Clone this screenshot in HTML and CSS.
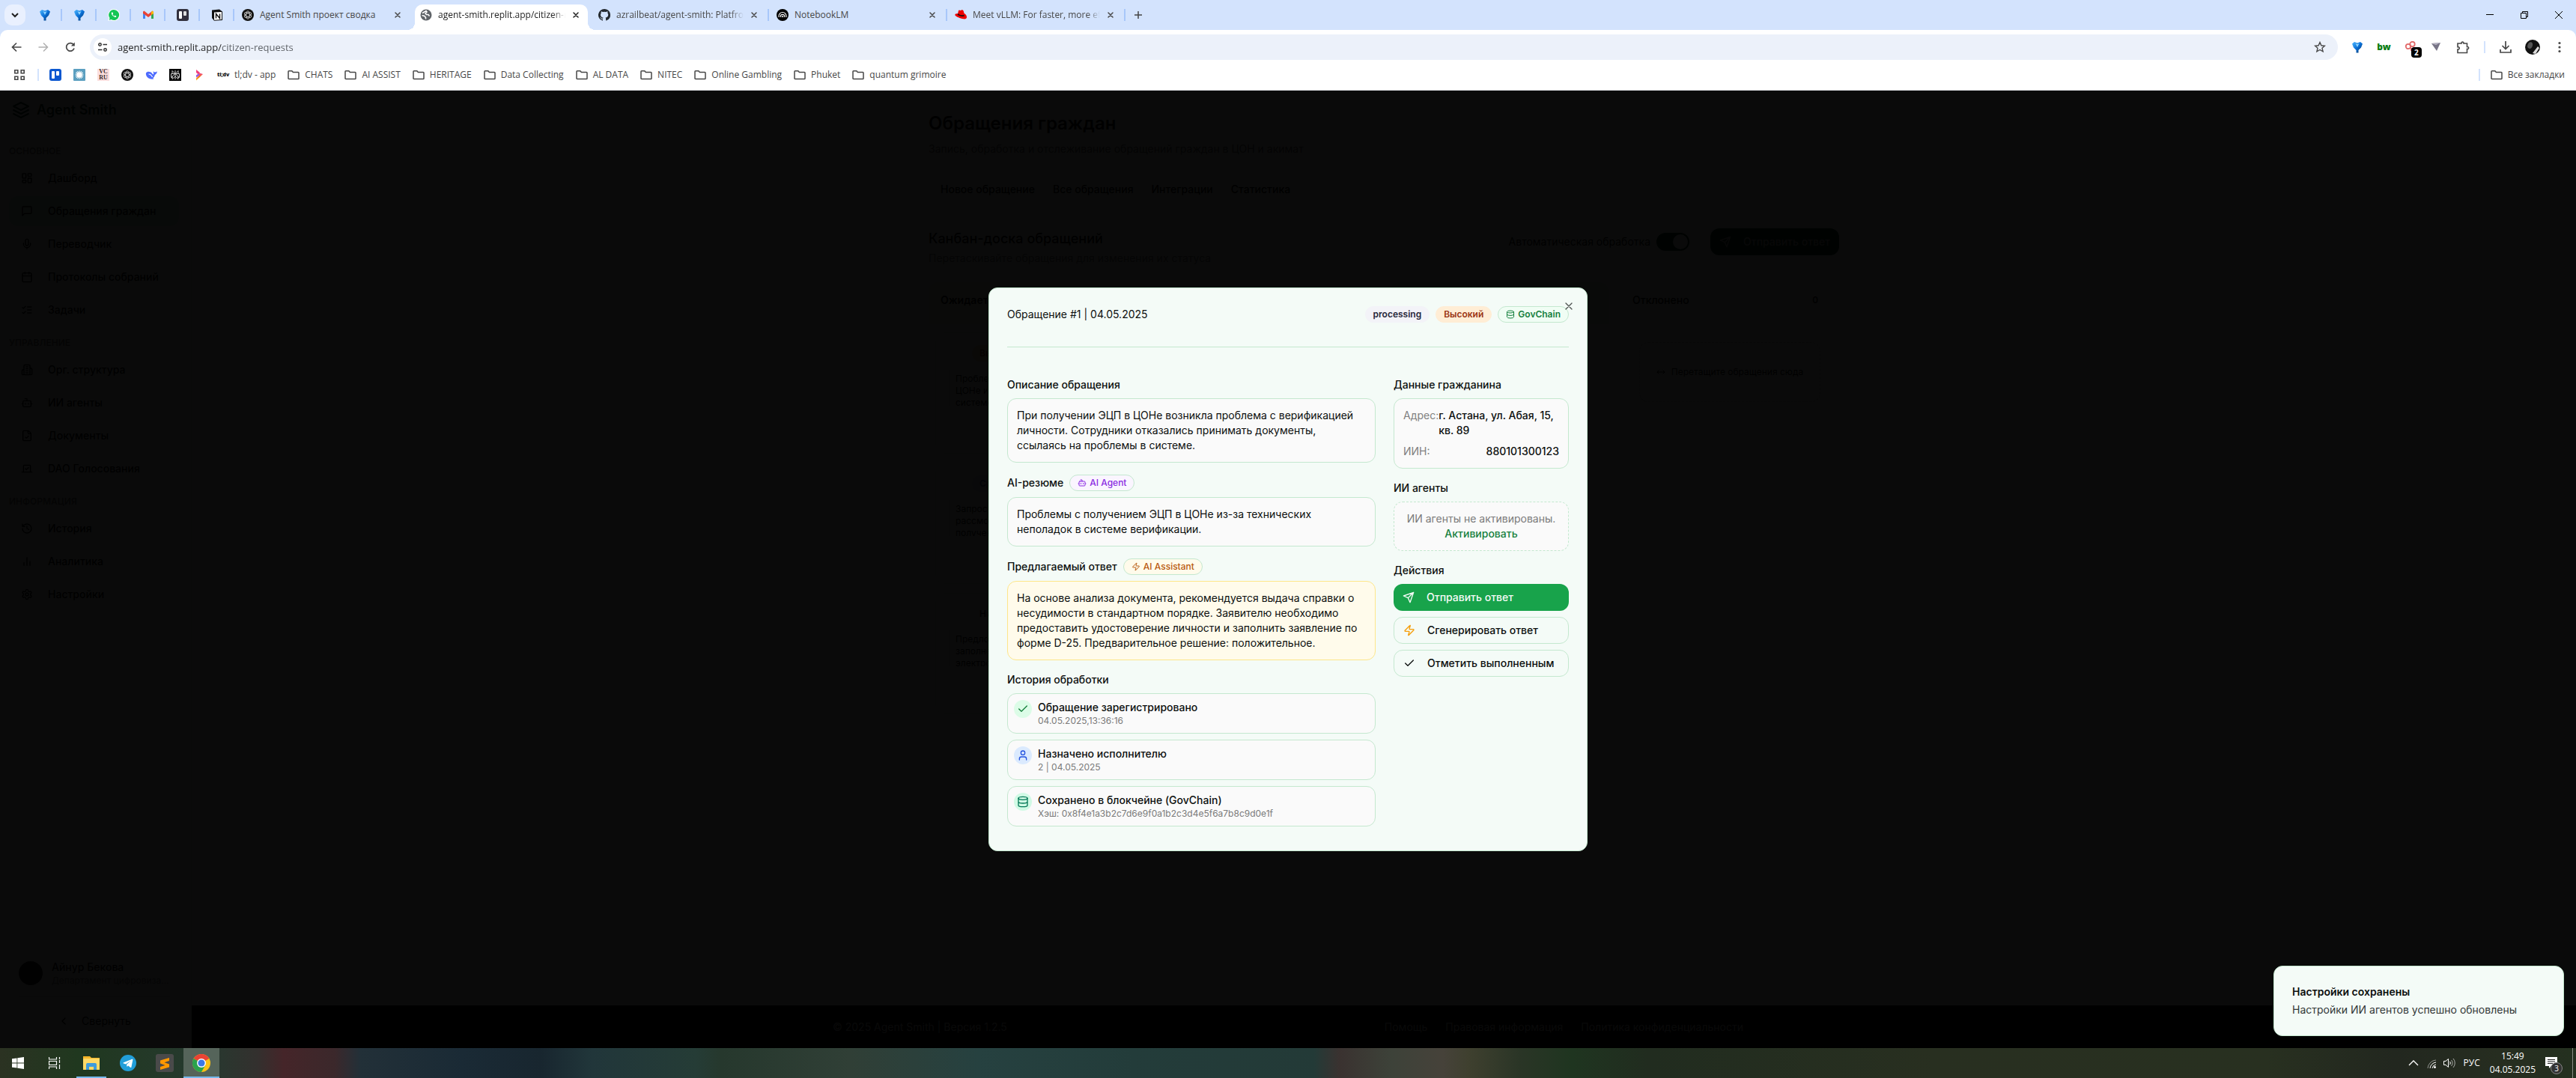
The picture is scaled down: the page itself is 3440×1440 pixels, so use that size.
FILE: index.html
```html
<!DOCTYPE html>
<html lang="ru">
<head>
<meta charset="utf-8">
<title>agent-smith.replit.app/citizen-requests</title>
<meta name="viewport" content="width=device-width, initial-scale=1">
<link rel="stylesheet" href="styles.css">
</head>
<body>
<svg class="sprite" aria-hidden="true">
  <defs>
    <linearGradient id="pin-blue" x1="0" y1="0" x2="1" y2="1"><stop offset="0" stop-color="#4db8ff"/><stop offset=".5" stop-color="#0a6fd6"/><stop offset="1" stop-color="#06315f"/></linearGradient>
    <linearGradient id="tl-warm" x1="0" y1="0" x2="0" y2="1"><stop offset="0" stop-color="#ec4899"/><stop offset=".5" stop-color="#f97316"/><stop offset="1" stop-color="#fbbf24"/></linearGradient>
  </defs>
  <symbol id="i-x" viewBox="0 0 24 24"><path d="M18 6 6 18M6 6l12 12"/></symbol>
  <symbol id="i-db" viewBox="0 0 24 24"><ellipse cx="12" cy="5" rx="9" ry="3"/><path d="M3 5v14a9 3 0 0 0 18 0V5M3 12a9 3 0 0 0 18 0"/></symbol>
  <symbol id="i-bot" viewBox="0 0 24 24"><path d="M12 8V4H8"/><rect width="16" height="12" x="4" y="8" rx="2"/><path d="M2 14h2M20 14h2M15 13v2M9 13v2"/></symbol>
  <symbol id="i-zap" viewBox="0 0 24 24"><path d="M4 14a1 1 0 0 1-.78-1.63l9.900-10.200a.5.5 0 0 1 .86.46l-1.920 6.020A1 1 0 0 0 13 10h7a1 1 0 0 1 .78 1.630l-9.900 10.200a.5.5 0 0 1-.86-.46l1.920-6.020A1 1 0 0 0 11 14z"/></symbol>
  <symbol id="i-send" viewBox="0 0 24 24"><path d="m22 2-7 20-4-9-9-4ZM22 2 11 13"/></symbol>
  <symbol id="i-check" viewBox="0 0 24 24"><path d="M20 6 9 17l-5-5"/></symbol>
  <symbol id="i-user" viewBox="0 0 24 24"><path d="M19 21v-2a4 4 0 0 0-4-4H9a4 4 0 0 0-4 4v2"/><circle cx="12" cy="7" r="4"/></symbol>
  <symbol id="i-layers" viewBox="0 0 24 24"><path d="m12 2 10 5-10 5L2 7ZM2 17l10 5 10-5M2 12l10 5 10-5"/></symbol>
  <symbol id="i-dash" viewBox="0 0 24 24"><rect width="7" height="9" x="3" y="3" rx="1"/><rect width="7" height="5" x="14" y="3" rx="1"/><rect width="7" height="9" x="14" y="12" rx="1"/><rect width="7" height="5" x="3" y="16" rx="1"/></symbol>
  <symbol id="i-msg" viewBox="0 0 24 24"><path d="M21 15a2 2 0 0 1-2 2H7l-4 4V5a2 2 0 0 1 2-2h14a2 2 0 0 1 2 2z"/></symbol>
  <symbol id="i-mic" viewBox="0 0 24 24"><rect x="9" y="2" width="6" height="13" rx="3"/><path d="M19 10v2a7 7 0 0 1-14 0v-2M12 19v3"/></symbol>
  <symbol id="i-cal" viewBox="0 0 24 24"><path d="M8 2v4M16 2v4M3 10h18"/><rect width="18" height="18" x="3" y="4" rx="2"/></symbol>
  <symbol id="i-list" viewBox="0 0 24 24"><path d="m3 17 2 2 4-4M3 7l2 2 4-4M13 6h8M13 12h8M13 18h8"/></symbol>
  <symbol id="i-build" viewBox="0 0 24 24"><path d="M6 22V4a2 2 0 0 1 2-2h8a2 2 0 0 1 2 2v18ZM6 12H4a2 2 0 0 0-2 2v6a2 2 0 0 0 2 2h2M18 9h2a2 2 0 0 1 2 2v9a2 2 0 0 1-2 2h-2M10 6h4M10 10h4M10 14h4M10 18h4"/></symbol>
  <symbol id="i-file" viewBox="0 0 24 24"><path d="M15 2H6a2 2 0 0 0-2 2v16a2 2 0 0 0 2 2h12a2 2 0 0 0 2-2V7ZM14 2v4a2 2 0 0 0 2 2h4M9 15l2 2 4-4"/></symbol>
  <symbol id="i-vote" viewBox="0 0 24 24"><path d="m9 12 2 2 4-4M5 7a2 2 0 0 1 2-2h10a2 2 0 0 1 2 2v12H5ZM22 19H2"/></symbol>
  <symbol id="i-hist" viewBox="0 0 24 24"><path d="M3 12a9 9 0 1 0 9-9 9.750 9.750 0 0 0-6.740 2.740L3 8M3 3v5h5M12 7v5l4 2"/></symbol>
  <symbol id="i-bars" viewBox="0 0 24 24"><path d="M18 20v-8M12 20V4M6 20v-6"/></symbol>
  <symbol id="i-gear" viewBox="0 0 24 24"><path d="M12.200 2h-.4a2 2 0 0 0-2 2v.2a2 2 0 0 1-1 1.700l-.4.3a2 2 0 0 1-2 0l-.2-.1a2 2 0 0 0-2.700.7l-.2.4a2 2 0 0 0 .7 2.700l.2.1a2 2 0 0 1 1 1.700v.6a2 2 0 0 1-1 1.700l-.2.1a2 2 0 0 0-.7 2.700l.2.4a2 2 0 0 0 2.700.7l.2-.1a2 2 0 0 1 2 0l.4.3a2 2 0 0 1 1 1.700v.2a2 2 0 0 0 2 2h.4a2 2 0 0 0 2-2v-.2a2 2 0 0 1 1-1.700l.4-.3a2 2 0 0 1 2 0l.2.1a2 2 0 0 0 2.700-.7l.2-.4a2 2 0 0 0-.7-2.700l-.2-.1a2 2 0 0 1-1-1.700v-.6a2 2 0 0 1 1-1.700l.2-.1a2 2 0 0 0 .7-2.700l-.2-.4a2 2 0 0 0-2.700-.7l-.2.1a2 2 0 0 1-2 0l-.4-.3a2 2 0 0 1-1-1.700V4a2 2 0 0 0-2-2z"/><circle cx="12" cy="12" r="3"/></symbol>
  <symbol id="i-left" viewBox="0 0 24 24"><path d="m15 18-6-6 6-6"/></symbol>
  <symbol id="i-move" viewBox="0 0 24 24"><path d="m18 8 4 4-4 4M2 12h20M6 8l-4 4 4 4"/></symbol>
  <symbol id="i-folder" viewBox="0 0 16 16"><path d="M1 3.500c0-.6.3-.8.8-.8h4l1.600 1.800h6.800c.5 0 .8.3.8.8v7.400c0 .5-.3.8-.8.8H1.800c-.5 0-.8-.3-.8-.8Z" fill="none" stroke="#474747" stroke-width="1.500"/></symbol>
  <symbol id="i-pin" viewBox="0 0 16 16"><path d="M1 3.500 4 1l4 1.500L12 1l3 2.500-2 5-3.500 3.500v3.500h-3V12L3 8.500Z" fill="url(#pin-blue)"/><path d="M5.500 3 8 8l2.500-5L8 4Z" fill="#8fd6ff"/></symbol>
  <symbol id="i-gpt" viewBox="0 0 16 16"><circle cx="8" cy="8" r="8" fill="#111"/><g fill="none" stroke="#ddd" stroke-width=".8"><ellipse cx="8" cy="8" rx="2.400" ry="5.200"/><ellipse cx="8" cy="8" rx="2.400" ry="5.200" transform="rotate(60 8 8)"/><ellipse cx="8" cy="8" rx="2.400" ry="5.200" transform="rotate(120 8 8)"/></g></symbol>
  <symbol id="i-trello" viewBox="0 0 16 16"><rect width="16" height="16" rx="3" fill="#0b57d0"/><rect x="3" y="3" width="4" height="10" rx="1" fill="#fff"/><rect x="9" y="3" width="4" height="6" rx="1" fill="#fff"/></symbol>
</svg>

<header class="browser">
  <div class="tabstrip">
    <button class="tab-search" aria-label="Поиск вкладок"><svg class="s12" viewBox="0 0 12 12"><path d="m2 4 4 4 4-4" fill="none" stroke="#1f1f1f" stroke-width="2"/></svg></button>
    <div class="tabs">
      <button class="pinned" aria-label="Вкладка 1"><svg class="s16"><use href="#i-pin"/></svg></button>
      <button class="pinned" aria-label="Вкладка 2"><svg class="s16"><use href="#i-pin"/></svg></button>
      <button class="pinned" aria-label="WhatsApp"><svg class="s16" viewBox="0 0 16 16"><path d="M8 0a8 8 0 1 1-3.800 15L.3 16l1.100-3.800A8 8 0 0 1 8 0Z" fill="#fff"/><path d="M8 1a7 7 0 1 1-3.500 13l-2.700.7.7-2.600A7 7 0 0 1 8 1Z" fill="#14c656"/><path d="M5.600 4.400c-1.500.8-.5 3 1 4.600s3.900 2.800 4.800 1.100c.3-.6-1.600-1.700-2-1.300l-.6.7c-1-.3-2-1.400-2.400-2.300l.6-.7c.3-.5-.6-2.400-1.400-2.100Z" fill="#fff"/></svg></button>
      <button class="pinned" aria-label="Gmail"><svg class="s16" viewBox="0 0 16 16"><path d="M1 3.500V13h3V6.500Z" fill="#4285f4"/><path d="M15 3.500V13h-3V6.500Z" fill="#34a853"/><path d="M1 3.500 2.500 2.500 8 7l5.500-4.500L15 4v2l-7 5-7-5Z" fill="#ea4335"/><path d="m12 4 1.500-1.500L15 4v2l-3 2Z" fill="#fbbc04"/></svg></button>
      <button class="pinned" aria-label="Trello"><svg class="s16" viewBox="0 0 16 16"><rect width="16" height="16" rx="3" fill="#32303d"/><rect x="3" y="3" width="4" height="10" rx="1" fill="#fff"/><rect x="9" y="3" width="4" height="6" rx="1" fill="#ddd"/></svg></button>
      <button class="pinned" aria-label="Notion"><svg class="s16" viewBox="0 0 16 16"><path d="m1 1.500 10-1 4 3V15l-11 .7L1 12Z" fill="#111"/><path d="M4 4.500 14 4v10l-10 .7Z" fill="#fff"/><path d="M6.500 12.500v-6l5 6v-6" fill="none" stroke="#111" stroke-width="1.400"/></svg></button>
      <div class="tab"><svg class="s16"><use href="#i-gpt"/></svg><span class="tab-title">Agent Smith проект сводка</span><button class="tab-x" aria-label="Закрыть"><svg class="line s12"><use href="#i-x"/></svg></button></div>
      <div class="tab active"><svg class="s16" viewBox="0 0 16 16"><circle cx="8" cy="8" r="7.500" fill="#5f6368"/><path d="M3 5.500 8 2.500l1 1.500-2 2 1.500 1.500H11l1.500 2M2.500 8.500l3.500 1 1.500 2v2" fill="none" stroke="#fff" stroke-width="1.600"/></svg><span class="tab-title fade">agent-smith.replit.app/citizen-requests</span><button class="tab-x" aria-label="Закрыть"><svg class="line s12"><use href="#i-x"/></svg></button></div>
      <div class="tab"><svg class="s16" viewBox="0 0 16 16"><path d="M8 0a8 8 0 0 0-2.500 15.600c.4.100.5-.2.5-.4v-1.500c-2 .5-2.600-1-2.600-1-.4-.8-.9-1.100-.9-1.100-.7-.5.1-.5.1-.5.8.1 1.200.8 1.200.8.7 1.200 1.900.9 2.300.7.1-.5.3-.9.5-1.100-1.800-.2-3.600-.9-3.600-4 0-.9.3-1.600.8-2.100-.1-.2-.4-1 .1-2.100 0 0 .7-.2 2.200.8a7.500 7.500 0 0 1 4 0c1.500-1 2.200-.8 2.200-.8.4 1.100.1 1.900.1 2.100.5.5.8 1.200.8 2.100 0 3.100-1.900 3.800-3.700 4 .3.3.6.8.6 1.500v2.200c0 .2.1.5.5.4A8 8 0 0 0 8 0Z" fill="#24292f"/></svg><span class="tab-title fade">azrailbeat/agent-smith: Platfrom for agents</span><button class="tab-x" aria-label="Закрыть"><svg class="line s12"><use href="#i-x"/></svg></button></div>
      <div class="tab"><svg class="s16" viewBox="0 0 16 16"><circle cx="8" cy="8" r="8" fill="#000"/><g fill="none" stroke="#fff" stroke-width="1.100"><path d="M3 11V9.500a5 5 0 0 1 10 0V11M5.200 11v-.8a2.800 2.800 0 0 1 5.600 0v.8M7.200 11v-.5a.8.8 0 0 1 1.600 0v.5"/></g></svg><span class="tab-title">NotebookLM</span><button class="tab-x" aria-label="Закрыть"><svg class="line s12"><use href="#i-x"/></svg></button></div>
      <div class="tab"><svg class="s16" viewBox="0 0 16 16"><path d="M4 6.500 5 2.300c.3-.8 1-.9 1.600-.5l1 .3 1.300-.7c.8-.3 2.300.1 2.700 1l1 3.600c2 .8 3.400 2.600 3.400 5 0 2-2 2.800-4.500 2.300C7 12.500 2 10.500.5 8.500-.2 7 1.500 6 4 6.500Z" fill="#e00"/><path d="M4 6.500c1 2 6 3.500 8.600 2" fill="none" stroke="#111" stroke-width="1.600"/></svg><span class="tab-title fade">Meet vLLM: For faster, more efficient LLM inference</span><button class="tab-x" aria-label="Закрыть"><svg class="line s12"><use href="#i-x"/></svg></button></div>
      <button class="new-tab" aria-label="Новая вкладка"><svg class="s12" viewBox="0 0 12 12"><path d="M6 1v10M1 6h10" stroke="#444" stroke-width="1.500"/></svg></button>
    </div>
    <div class="win">
      <button aria-label="Свернуть окно"><svg width="10" height="10" viewBox="0 0 10 10"><path d="M0 4.500h10" stroke="#000"/></svg></button>
      <button aria-label="Восстановить"><svg width="10" height="10" viewBox="0 0 10 10"><path d="M.5 2.500h7v7h-7ZM2.500 2.500v-2h7v7h-2" fill="none" stroke="#000"/></svg></button>
      <button aria-label="Закрыть окно"><svg width="10" height="10" viewBox="0 0 10 10"><path d="m0 0 10 10M10 0 0 10" stroke="#000"/></svg></button>
    </div>
  </div>

  <div class="toolbar">
    <div class="nav-btns">
      <button aria-label="Назад"><svg class="s16" viewBox="0 0 16 16"><path d="M14.500 8H2.500M8 2.500 2.500 8 8 13.500" fill="none" stroke="#474747" stroke-width="1.700"/></svg></button>
      <button aria-label="Вперёд"><svg class="s16" viewBox="0 0 16 16"><path d="M1.500 8h12M8 2.500 13.500 8 8 13.500" fill="none" stroke="#b0b0b0" stroke-width="1.500"/></svg></button>
      <button aria-label="Обновить"><svg class="s16" viewBox="0 0 16 16"><path d="M13 9.500A5.300 5.300 0 1 1 12.400 5" fill="none" stroke="#474747" stroke-width="1.700"/><path d="M13.800 1.500v5h-5Z" fill="#474747"/></svg></button>
    </div>
    <div class="omnibox">
      <button class="site-info" aria-label="Сведения о сайте"><svg class="s16" viewBox="0 0 16 16"><g fill="none" stroke="#333" stroke-width="1.500"><circle cx="4.500" cy="4.500" r="1.700"/><path d="M8.500 4.500H14M2 11.500h5.500"/><circle cx="11.500" cy="11.500" r="1.700"/></g></svg></button>
      <input class="url" type="text" aria-label="Адресная строка" value="agent-smith.replit.app/citizen-requests">
      <button aria-label="В закладки"><svg class="s16" viewBox="0 0 16 16"><path d="m8 1.500 1.900 4.300 4.600.4-3.500 3.100 1.100 4.600L8 11.500l-4.100 2.400L5 9.300 1.500 6.200l4.600-.4Z" fill="none" stroke="#474747" stroke-width="1.400"/></svg></button>
    </div>
    <div class="ext">
      <button aria-label="Расширение"><svg class="s16"><use href="#i-pin"/></svg></button>
      <button class="bw" aria-label="bw">bw</button>
      <button class="has-badge" aria-label="Расширение, 2"><svg class="s16" viewBox="0 0 16 16"><g fill="none" stroke="#e26a6a" stroke-width="1.800"><circle cx="5" cy="7" r="3.200"/><circle cx="10.500" cy="4" r="3.200"/><path d="M9 9v4"/></g></svg><span class="ext-badge">2</span></button>
      <button aria-label="Расширение"><svg class="s16" viewBox="0 0 16 16"><path d="m2 3 12-1L9 13Z" fill="#777486"/><path d="m2 3 12-1-6 3Z" fill="#b8b5c4"/></svg></button>
      <button aria-label="Расширения"><svg class="s20" viewBox="0 0 20 20"><path d="M3 5h5c-.6-2.500 3.500-2.500 3 0h4.500v4.500c2.800-.5 2.800 3.500 0 3V17.500H3V13c3 .5 3-3.800 0-3.300Z" fill="none" stroke="#474747" stroke-width="1.600"/></svg></button>
      <i class="bar"></i>
      <button aria-label="Загрузки"><svg class="s16" viewBox="0 0 16 16"><path d="M8 0v10M3.500 6 8 10.500 12.500 6M1 11v4h14v-4" fill="none" stroke="#474747" stroke-width="1.700"/></svg></button>
      <button aria-label="Профиль"><svg class="s20" viewBox="0 0 20 20"><circle cx="10" cy="10" r="10" fill="#111"/><path d="M5 4c3-2 6 0 5 4s-4 5-6 3 0-5 1-7Z" fill="#555"/><path d="m10 18 7-9 2 2-5 8Z" fill="#ddd"/></svg></button>
      <button aria-label="Меню"><svg class="s16" viewBox="0 0 16 16"><g fill="#474747"><circle cx="8" cy="2.500" r="1.600"/><circle cx="8" cy="8" r="1.600"/><circle cx="8" cy="13.500" r="1.600"/></g></svg></button>
    </div>
  </div>

  <nav class="bookmarks">
    <a href="#" aria-label="Приложения"><svg class="s16" viewBox="0 0 16 16"><path d="M1.800 1.800h4v4h-4zM10.200 1.800h4v4h-4zM1.800 10.200h4v4h-4zM10.200 10.200h4v4h-4z" fill="none" stroke="#474747" stroke-width="1.600"/></svg></a>
    <i class="bar"></i>
    <a href="#" aria-label="Trello"><svg class="s16"><use href="#i-trello"/></svg></a>
    <a href="#" aria-label="Claude"><svg class="s16" viewBox="0 0 16 16"><rect width="16" height="16" rx="1" fill="#5b9fc0"/><circle cx="8" cy="8" r="3.500" fill="#fff"/><path d="M8 2.500v11M2.500 8h11M4 4l8 8M12 4l-8 8M5.500 3l5 10M3 10.500l10-5M10.500 3l-5 10M3 5.500l10 5" stroke="#fff"/></svg></a>
    <a href="#" aria-label="VC.RU" class="vc"><span>VC</span><span>RU</span></a>
    <a href="#" aria-label="ChatGPT"><svg class="s16"><use href="#i-gpt"/></svg></a>
    <a href="#" aria-label="DeepSeek"><svg class="s16" viewBox="0 0 16 16"><path d="M1 5.500C2 3.500 5 3 7.500 4.500 9 5.500 9.500 7 11 7.500c.5-1.500-.5-3-.3-4.500.8 1.200 1.800 1.500 2.300 1.500C14 4.500 15 4 15.800 3.300c-.1 2.500-1.300 4-3 4.700-.3 2-1.300 3.500-2.500 4.300l1.200 1.200c-2 .3-4.500.2-6.500-.8C2.500 11.500.3 8.500 1 5.500Z" fill="#4d6bfe"/><path d="M4.500 7c2.500 0 4 2 5 4" fill="none" stroke="#fff" stroke-width="1.200"/></svg></a>
    <a href="#" aria-label="Perplexity"><svg class="s16" viewBox="0 0 16 16"><rect width="16" height="16" fill="#000"/><path d="M8 2v12M4 2.500 8 6.500l4-4v4H4ZM2.500 6.500h11v5H12V10L8 6.500 4 10v1.500H2.500ZM4 10v3.500l4-3.500 4 3.500V10" fill="none" stroke="#ccc"/></svg></a>
    <a href="#" aria-label="Поток"><svg class="s16" viewBox="0 0 16 16"><path d="m4 1 5 4-2 2.500L4 5Z" fill="#f43f7a"/><path d="M4 8.500 8.500 5.500 13 7l-9 8.500v-3l4-3.500-4 2.500Z" fill="url(#tl-warm)"/><path d="m4 8.500 4-2v2l-4 3Z" fill="#8b5cf6"/></svg></a>
    <a href="#"><b class="tldv">tl;dv</b>tl;dv - app</a>
    <a href="#"><svg class="s16"><use href="#i-folder"/></svg>CHATS</a>
    <a href="#"><svg class="s16"><use href="#i-folder"/></svg>AI ASSIST</a>
    <a href="#"><svg class="s16"><use href="#i-folder"/></svg>HERITAGE</a>
    <a href="#"><svg class="s16"><use href="#i-folder"/></svg>Data Collecting</a>
    <a href="#"><svg class="s16"><use href="#i-folder"/></svg>AL DATA</a>
    <a href="#"><svg class="s16"><use href="#i-folder"/></svg>NITEC</a>
    <a href="#"><svg class="s16"><use href="#i-folder"/></svg>Online Gambling</a>
    <a href="#"><svg class="s16"><use href="#i-folder"/></svg>Phuket</a>
    <a href="#"><svg class="s16"><use href="#i-folder"/></svg>quantum grimoire</a>
    <div class="all-marks"><i class="bar"></i><a href="#"><svg class="s16"><use href="#i-folder"/></svg>Все закладки</a></div>
  </nav>
</header>

<div class="viewport">
  <div class="app">
    <aside class="sidebar">
      <div class="brand"><svg class="line s24"><use href="#i-layers"/></svg>Agent Smith</div>
      <nav class="menu">
        <h4>ОСНОВНОЕ</h4>
        <a href="#"><svg class="line s16"><use href="#i-dash"/></svg>Дашборд</a>
        <a href="#" class="current"><svg class="line s16"><use href="#i-msg"/></svg>Обращения граждан</a>
        <a href="#"><svg class="line s16"><use href="#i-mic"/></svg>Переводчик</a>
        <a href="#"><svg class="line s16"><use href="#i-cal"/></svg>Протоколы собраний</a>
        <a href="#"><svg class="line s16"><use href="#i-list"/></svg>Задачи</a>
        <h4>УПРАВЛЕНИЕ</h4>
        <a href="#"><svg class="line s16"><use href="#i-build"/></svg>Орг. структура</a>
        <a href="#"><svg class="line s16"><use href="#i-bot"/></svg>ИИ агенты</a>
        <a href="#"><svg class="line s16"><use href="#i-file"/></svg>Документы</a>
        <a href="#"><svg class="line s16"><use href="#i-vote"/></svg>DAO Голосования</a>
        <h4>ИНФОРМАЦИЯ</h4>
        <a href="#"><svg class="line s16"><use href="#i-hist"/></svg>История</a>
        <a href="#"><svg class="line s16"><use href="#i-bars"/></svg>Аналитика</a>
        <a href="#"><svg class="line s16"><use href="#i-gear"/></svg>Настройки</a>
      </nav>
      <div class="account">
        <div class="me"><i class="avatar"></i><div class="me-text"><strong>Айнур Бекова</strong><span>Департамент цифровизации</span></div></div>
        <button class="collapse"><svg class="line s16"><use href="#i-left"/></svg>Свернуть</button>
      </div>
    </aside>

    <div class="page">
      <main class="content">
        <h1>Обращения граждан</h1>
        <p class="lead">Запись, обработка и отслеживание обращений граждан в ЦОН и акимат</p>
        <div class="page-tabs">
          <button>Новое обращение</button><button class="on">Все обращения</button><button>Интеграции</button><button>Статистика</button>
        </div>
        <div class="board-head">
          <div class="board-title"><h2>Канбан-доска обращений</h2><p>Перетаскивайте обращения для изменения их статуса</p></div>
          <label class="auto">Автоматическая обработка<input type="checkbox" class="switch" checked></label>
          <button class="send"><svg class="line s16"><use href="#i-send"/></svg>Отправить ответ</button>
        </div>
        <div class="board">
          <section class="column">
            <header class="col-head wait">Ожидает</header>
            <article class="ticket"><span class="prio high">Высокий</span><p>Проблемы с получением ЭЦП в<br>ЦОНе из-за неполадок в<br>системе верификации</p></article>
            <article class="ticket"><span class="prio mid">Средний</span><p>Запрос на<br>рассмотрение<br>получения</p></article>
            <article class="ticket"><span class="prio">Низкий</span><p>Предложение<br>заполнения<br>электронной формы</p></article>
          </section>
          <section class="column"><header class="col-head"></header></section>
          <section class="column"><header class="col-head done"></header></section>
          <section class="column">
            <header class="col-head rejected"><span>Отклонено</span><span class="count">0</span></header>
            <div class="drop"><svg class="line s12"><use href="#i-move"/></svg>Перетащите обращения сюда</div>
          </section>
        </div>
      </main>
      <footer class="footer">
        <div class="footer-in">
          <span>© 2025 Agent Smith | Версия 1.2.5</span>
          <div class="links"><a href="#">Помощь</a><a href="#">Правовая информация</a><a href="#">Политика конфиденциальности</a></div>
        </div>
      </footer>
    </div>
  </div>

  <div class="overlay">
    <div class="modal" role="dialog" aria-modal="true" aria-labelledby="dlg-title">
      <button class="close" aria-label="Закрыть"><svg class="line s16"><use href="#i-x"/></svg></button>
      <div class="modal-head">
        <span id="dlg-title">Обращение #1 | 04.05.2025</span>
        <div class="badges">
          <span class="badge status">processing</span>
          <span class="badge orange">Высокий</span>
          <span class="badge chain"><svg class="line s12"><use href="#i-db"/></svg>GovChain</span>
        </div>
      </div>
      <hr class="rule">
      <div class="cols">
        <div class="stack">
          <section>
            <h3>Описание обращения</h3>
            <div class="box">При получении ЭЦП в ЦОНе возникла проблема с верификацией личности. Сотрудники отказались принимать документы, ссылаясь на проблемы в системе.</div>
          </section>
          <section>
            <h3>AI-резюме <span class="badge purple"><svg class="line s12"><use href="#i-bot"/></svg>AI Agent</span></h3>
            <div class="box">Проблемы с получением ЭЦП в ЦОНе из-за технических неполадок в системе верификации.</div>
          </section>
          <section>
            <h3>Предлагаемый ответ <span class="badge amber"><svg class="line s12"><use href="#i-zap"/></svg>AI Assistant</span></h3>
            <div class="box answer">На основе анализа документа, рекомендуется выдача справки о несудимости в стандартном порядке. Заявителю необходимо предоставить удостоверение личности и заполнить заявление по форме D-25. Предварительное решение: положительное.</div>
          </section>
          <section>
            <h3>История обработки</h3>
            <div class="events">
              <div class="event"><span class="dot green"><svg class="line s16"><use href="#i-check"/></svg></span><div><strong>Обращение зарегистрировано</strong><small>04.05.2025,13:36:16</small></div></div>
              <div class="event"><span class="dot blue"><svg class="line s16"><use href="#i-user"/></svg></span><div><strong>Назначено исполнителю</strong><small>2 | 04.05.2025</small></div></div>
              <div class="event"><span class="dot teal"><svg class="line s16"><use href="#i-db"/></svg></span><div><strong>Сохранено в блокчейне (GovChain)</strong><small>Хэш: 0x8f4e1a3b2c7d6e9f0a1b2c3d4e5f6a7b8c9d0e1f</small></div></div>
            </div>
          </section>
        </div>
        <div class="stack">
          <section>
            <h3>Данные гражданина</h3>
            <dl class="box facts">
              <div><dt>Адрес:</dt><dd>г. Астана, ул. Абая, 15, кв. 89</dd></div>
              <div><dt>ИИН:</dt><dd>880101300123</dd></div>
            </dl>
          </section>
          <section>
            <h3>ИИ агенты</h3>
            <div class="box agents">ИИ агенты не активированы. <button class="activate">Активировать</button></div>
          </section>
          <section>
            <h3>Действия</h3>
            <div class="events">
              <button class="action primary"><svg class="line s16"><use href="#i-send"/></svg>Отправить ответ</button>
              <button class="action"><svg class="line s16 gold"><use href="#i-zap"/></svg>Сгенерировать ответ</button>
              <button class="action"><svg class="line s16"><use href="#i-check"/></svg>Отметить выполненным</button>
            </div>
          </section>
        </div>
      </div>
    </div>
  </div>
  <div class="toast" role="status"><strong>Настройки сохранены</strong><span>Настройки ИИ агентов успешно обновлены</span></div>
</div>

<footer class="taskbar">
  <div class="tasks">
    <button aria-label="Пуск"><svg class="s16" viewBox="0 0 16 16"><path d="m0 2.300 6.500-.9v6.200H0ZM7.300 1.300 16 0v7.600H7.300ZM0 8.400h6.500v6.200L0 13.700ZM7.300 8.400H16V16l-8.700-1.300Z" fill="#fff"/></svg></button>
    <button aria-label="Представление задач"><svg class="s16" viewBox="0 0 16 16"><path d="M.5 0v3h10V0M.5 16v-3h10v3M.5 5.500h10v5H.5ZM14.500 0v3M14.500 4v4M14.500 10v6" fill="none" stroke="#fff" stroke-width="1.200"/></svg></button>
    <button class="running" aria-label="Проводник"><svg class="s24" viewBox="0 0 24 24"><path d="M1 3h9l2 2h11v16H1Z" fill="#f5b62a"/><path d="M1 6h22v15H1Z" fill="#ffd966"/><path d="M5 21v-7a2 2 0 0 1 2-2h10a2 2 0 0 1 2 2v7h-4v-4H9v4Z" fill="#3e9bdc"/></svg></button>
    <button aria-label="Telegram"><svg class="s24" viewBox="0 0 24 24"><circle cx="12" cy="12" r="11" fill="#229ed9"/><path d="m5 11.800 12.500-5c.6-.2 1 .1.9.8l-2 9.800c-.2.7-.6.8-1.200.5l-3-2.300-1.600 1.500-.5-3 5.500-5-6.700 4.300-3-.9c-.7-.2-.7-.5.1-.7Z" fill="#fff"/></svg></button>
    <button aria-label="Sublime Text"><svg class="s24" viewBox="0 0 24 24"><rect width="24" height="24" rx="3" fill="#4a4a4a"/><path d="M18 5v4l-6.500 2.200L18 13.500v4L6 21v-4l6.500-2L6 12.500v-4Z" fill="#ff9800"/></svg></button>
    <button class="running focused" aria-label="Chrome"><svg class="s24" viewBox="0 0 24 24"><circle cx="12" cy="12" r="12" fill="#fbc116"/><path d="M12 12 1.600 6A12 12 0 0 1 22.400 6Z" fill="#ea4335"/><path d="M1.600 6A12 12 0 0 0 12 24l5.200-9-5.200-3Z" fill="#2ba24c"/><circle cx="12" cy="12" r="6" fill="#fff"/><circle cx="12" cy="12" r="4.600" fill="#3b78e7"/></svg></button>
  </div>
  <div class="tray">
    <svg class="s16" viewBox="0 0 16 16"><path d="m2 11 6-6 6 6" fill="none" stroke="#fff" stroke-width="1.400"/></svg>
    <svg class="s16" viewBox="0 0 16 16"><g fill="none" stroke="#fff"><path d="M3 15A12 12 0 0 1 14 4" opacity=".5"/><path d="M6 15a9 9 0 0 1 8-8M9 15a6 6 0 0 1 5-5"/></g><circle cx="12.500" cy="13.500" r="1.500" fill="#fff"/></svg>
    <svg class="s16" viewBox="0 0 16 16"><g fill="none" stroke="#fff"><path d="M.5 5.500h2.500L6.500 2.500v11L3 10.500H.5ZM8.500 6a3 3 0 0 1 0 4"/><path d="M10.500 4a6 6 0 0 1 0 8M13 2a9 9 0 0 1 0 12" opacity=".6"/></g></svg>
    <span class="lang">РУС</span>
    <span class="clock"><span>15:49</span><span>04.05.2025</span></span>
    <button class="notes" aria-label="Уведомления, 3"><svg class="s16" viewBox="0 0 16 16"><path d="M0 0h16v12H8l-3 3v-3H0Z" fill="#fff"/><path d="M3 3.500h10M3 6h10M3 8.500h7" stroke="#222"/></svg><span class="note-count">3</span></button>
  </div>
</footer>
</body>
</html>
```
FILE: styles.css
```css
* { box-sizing: border-box; }
html { height: 100%; overflow: hidden; }
body {
  margin: 0;
  height: 100%;
  display: flex;
  flex-direction: column;
  overflow: hidden;
  font: 14px/20px Inter, "Noto Sans", sans-serif;
  color: #0c0f0e;
}
button { font: inherit; color: inherit; background: none; border: 0; padding: 0; margin: 0; }
a { color: inherit; text-decoration: none; }
h1, h2, h3, h4, p, dl, dd { margin: 0; }
svg { display: block; flex: none; }
.sprite { position: absolute; width: 0; height: 0; }
.line { fill: none; stroke: currentColor; stroke-width: 2; stroke-linecap: round; stroke-linejoin: round; }
.s12 { width: 12px; height: 12px; }
.s16 { width: 16px; height: 16px; }
.s20 { width: 20px; height: 20px; }
.s24 { width: 24px; height: 24px; }

/* Browser window */
.browser { flex: none; background: #d3e3fd; border-bottom: 1px solid #dfe1e5; font: 12px/16px "Open Sans", "Noto Sans", sans-serif; color: #474747; }
.tabstrip { display: flex; height: 40px; padding-left: 6px; }
.tab-search { width: 28px; height: 28px; margin: 6px 3px 0 0; display: grid; place-items: center; border-radius: 10px; background: #e9f0fe; }
.tabs { display: flex; flex: 1; min-width: 0; }
.pinned, .tab { height: 40px; display: flex; align-items: center; }
.pinned { width: 46px; justify-content: center; }
.pinned, .tab { background: linear-gradient(#a8c7fa, #a8c7fa) right 12px / 2px 16px no-repeat; }
.tab { width: 238px; padding: 0 14px 0 10px; gap: 8px; }
.tab:has(+ .active) { background: none; }
.tab.active { position: relative; background: none; color: #1f1f1f; z-index: 0; }
.tab.active::before {
  content: ""; position: absolute; z-index: -1; inset: 6px 4px 0 3px;
  background: #fff; border-radius: 10px 10px 0 0;
}
.tab.active::after {
  content: ""; position: absolute; z-index: -1; left: -7px; right: -6px; bottom: 0; height: 10px;
  background:
    radial-gradient(circle at 0 0, transparent 10px, #fff 10px) left / 10px 10px no-repeat,
    radial-gradient(circle at 100% 0, transparent 10px, #fff 10px) right / 10px 10px no-repeat;
}
.tab-title { flex: 1; min-width: 0; overflow: hidden; white-space: nowrap; }
.fade { -webkit-mask-image: linear-gradient(90deg, #000 90%, transparent); mask-image: linear-gradient(90deg, #000 90%, transparent); }
.tab-x { width: 12px; height: 12px; }
.tab-x .line { stroke-width: 3; }
.new-tab { width: 34px; display: grid; place-items: center; }
.win { display: flex; }
.win button { width: 46px; display: grid; place-items: center; }
.toolbar { display: flex; align-items: center; height: 46px; background: #fff; border-radius: 10px 10px 0 0; }
.nav-btns { display: flex; gap: 20px; padding: 0 18px 0 14px; }
.omnibox { flex: 1; height: 34px; display: flex; align-items: center; gap: 8px; padding: 0 16px 0 5px; border-radius: 17px; background: #ecf1fa; }
.site-info { width: 24px; height: 24px; border-radius: 12px; background: #fff; display: grid; place-items: center; }
.url {
  flex: 1; border: 0; padding: 0; outline: 0; font: 13px/20px "Open Sans", "Noto Sans", sans-serif;
  color: transparent; background: linear-gradient(90deg, #1f1f1f 138px, #5b5f64 138px);
  -webkit-background-clip: text; background-clip: text;
}
.ext { display: flex; align-items: center; width: 318px; justify-content: space-between; padding: 0 14px 0 18px; }
.bar { width: 2px; height: 16px; background: #d3e3fd; flex: none; }
.bw { font: 800 12px/16px "Open Sans", sans-serif; color: #0a7d12; }
.has-badge { position: relative; }
.ext-badge { position: absolute; left: 9px; top: 8px; width: 14px; height: 14px; border-radius: 4px; background: #000; color: #fff; font-weight: 700; font-size: 10px; line-height: 14px; text-align: center; }
.bookmarks { display: flex; align-items: center; height: 34px; padding: 0 15px 6px 18px; background: #fff; }
.bookmarks a { display: flex; align-items: center; gap: 7px; margin-right: 16px; white-space: nowrap; }
.bookmarks .bar { margin-right: 14px; }
.bookmarks .vc { flex-direction: column; gap: 0; width: 16px; height: 16px; background: #fbdede; color: #3a2c2c; font: 700 8px/8px "Liberation Serif", serif; }
.bookmarks .tldv { font: 800 7px/16px "Open Sans", sans-serif; color: #111; width: 16px; }
.all-marks { display: flex; align-items: center; margin-left: auto; }
.bookmarks .all-marks a { margin-right: 0; }

/* Dimmed application */
.viewport { position: relative; flex: 1 1 0; min-height: 0; overflow: hidden; }
.app { display: flex; height: 100%; background: #fafafa; }
.sidebar { width: 256px; display: flex; flex-direction: column; border-right: 1px solid #d9efe0; background: #fafafa; }
.brand { display: flex; align-items: center; gap: 9px; padding: 14px 16px; color: #0a3a22; font-size: 18px; line-height: 24px; font-weight: 600; }
.menu { flex: 1; padding: 21px 16px 0 12px; display: flex; flex-direction: column; gap: 4px; }
.menu h4 { font-size: 12px; line-height: 16px; font-weight: 600; color: #737373; margin: 12px 0 4px; }
.menu h4:first-child { margin-top: 0; }
.menu a { display: flex; align-items: center; gap: 20px; height: 40px; padding: 0 16px; border-radius: 12px; font-weight: 500; }
.menu .current { background: #c4eed4; }
.account { padding: 0 28px 24px 25px; }
.me { display: flex; align-items: center; gap: 12px; padding-bottom: 13px; border-bottom: 1px solid #d0d0d0; }
.avatar { width: 32px; height: 32px; border-radius: 50%; background: #222; flex: none; }
.me-text { min-width: 0; display: flex; flex-direction: column; }
.me-text strong { font-weight: 500; }
.me-text span { font-size: 12px; line-height: 16px; color: #777; overflow: hidden; white-space: nowrap; text-overflow: ellipsis; }
.collapse { display: flex; align-items: center; justify-content: center; gap: 16px; width: 100%; height: 24px; margin-top: 20px; }
.page { flex: 1; min-width: 0; display: flex; flex-direction: column; }
.content { flex: 1; min-height: 0; overflow: hidden; width: 100%; max-width: 1216px; margin: 0 auto; padding-top: 28px; }
.content h1 { font-size: 24px; line-height: 32px; font-weight: 600; }
.lead { margin-top: 6px; line-height: 24px; color: #606060; }
.page-tabs { display: inline-flex; height: 40px; margin: 22px 0 32px; padding: 4px; border-radius: 12px; background: #f5f5f5; }
.page-tabs button { padding: 0 12px; border-radius: 8px; font-weight: 500; }
.page-tabs .on { background: #fff; }
.board-head { display: flex; align-items: flex-start; height: 56px; }
.board-title { flex: 1; }
.board-title h2 { font-size: 18px; line-height: 28px; font-weight: 500; }
.board-title p { line-height: 24px; color: #777; }
.auto { display: flex; align-items: center; gap: 8px; height: 36px; margin-right: 28px; }
.switch { appearance: none; width: 44px; height: 24px; margin: 0; padding: 2px; border-radius: 12px; background: #063d22; }
.switch::before { content: ""; display: block; width: 20px; height: 20px; margin-left: 20px; border-radius: 50%; background: #fafafa; }
.send { display: flex; align-items: center; gap: 16px; height: 36px; padding: 0 12px; border-radius: 12px; background: #06391f; color: #b5b5b5; font-weight: 500; }
.board { display: grid; grid-template-columns: repeat(4, minmax(0, 1fr)); gap: 16px; margin-top: 16px; }
.col-head { height: 56px; padding: 14px 16px; display: flex; justify-content: space-between; font-weight: 600; border-radius: 12px 12px 0 0; background: #f4fbf7; margin-bottom: 11px; }
.wait { background: #fbf6dc; }
.done { background: #d4f5e0; }
.rejected { background: #ededed; font-weight: 500; padding-right: 28px; margin-bottom: 24px; }
.count { font-size: 12px; }
.ticket { height: 162px; margin: 0 9px 12px; padding: 16px 17px; border: 1px solid #e5efe8; border-radius: 12px; }
.prio { display: inline-block; margin-left: 31px; padding: 2px 10px; border-radius: 11px; font-size: 12px; line-height: 18px; font-weight: 600; }
.high { background: #ffddb8; color: #7a2e0e; }
.mid { background: #d9e2f5; color: #1e3a9a; }
.ticket p { height: 48px; margin-top: 11px; padding: 4px 8px 0; overflow: hidden; border-left: 1px solid #e5e5e5; font-size: 12px; line-height: 16px; }
.drop { display: flex; align-items: center; justify-content: center; gap: 8px; height: 80px; margin: 0 25px; border: 1px dashed #bbb; border-radius: 12px; font-size: 12px; }
.footer { background: #000; color: #d0d0d0; padding: 0 256px 0 0; }
.footer-in { display: flex; align-items: center; justify-content: space-between; width: 100%; max-width: 1216px; height: 57px; margin: 0 auto; }
.links { display: flex; gap: 24px; }

/* Request dialog */
.overlay { position: absolute; inset: 0; display: flex; align-items: center; justify-content: center; background: rgba(0, 0, 0, .96); }
.modal { position: relative; width: 100%; max-width: 800px; padding: 24px; border: 1px solid #c4e8cf; border-radius: 12px; background: #f4fbf7; }
.close { position: absolute; top: 16px; right: 16px; opacity: .7; }
.modal-head { display: flex; align-items: center; justify-content: space-between; height: 22px; }
.badges { display: flex; gap: 8px; }
.badge { display: inline-flex; align-items: center; gap: 4px; height: 22px; padding: 0 10px; border: 1px solid #c4e8cf; border-radius: 11px; font-size: 12px; line-height: 16px; font-weight: 600; }
.status { background: #f3f3f8; border-color: #f3f3f8; color: #27273a; }
.orange { background: #ffedd5; border-color: #ffedd5; color: #9a3412; }
.chain { background: #f0fdf4; color: #15803d; }
.purple { background: #faf5ff; color: #8b2be2; font-weight: 500; }
.amber { background: #fffbeb; color: #b95a10; font-weight: 500; }
.rule { height: 1px; margin: 32px 0 40px; border: 0; background: #c4e8cf; }
.cols { display: grid; grid-template-columns: minmax(0, 492fr) minmax(0, 234fr); gap: 24px; padding-bottom: 8px; }
.stack { display: flex; flex-direction: column; gap: 16px; }
.stack h3 { display: flex; align-items: center; gap: 8px; margin-bottom: 8px; font-size: 14px; line-height: 20px; font-weight: 500; }
.box { padding: 12px; border: 1px solid #c4e8cf; border-radius: 12px; background: #fafafa; }
.answer { background: #fffbeb; border-color: #fde68a; }
.events { display: flex; flex-direction: column; gap: 8px; }
.event { display: flex; gap: 8px; padding: 8px; border: 1px solid #c4e8cf; border-radius: 12px; background: #fafafa; }
.event strong, .event small { display: block; font-weight: 500; }
.event small { font-size: 12px; line-height: 16px; font-weight: 400; color: #7b7b7b; }
.dot { width: 24px; height: 24px; border-radius: 50%; display: grid; place-items: center; flex: none; }
.green { background: #dcfce7; color: #16803c; }
.blue { background: #dbeafe; color: #2554e0; }
.teal { background: #d1fae5; color: #047857; }
.facts { display: flex; flex-direction: column; gap: 8px; }
.facts div { display: flex; justify-content: space-between; }
.facts dt { color: #808080; }
.facts dd { font-weight: 500; }
.agents { border-style: dashed; text-align: center; color: #7b7b7b; }
.activate { display: block; margin: 0 auto; color: #15803d; font-weight: 500; }
.action { display: flex; align-items: center; gap: 16px; height: 36px; padding: 0 12px; border: 1px solid #c4e8cf; border-radius: 12px; font-weight: 500; white-space: nowrap; }
.primary { border: 0; background: #18a34b; color: #f4fbf7; }
.gold { color: #f59e0b; }

.toast { position: absolute; right: 16px; bottom: 16px; width: 388px; padding: 24px; display: flex; flex-direction: column; gap: 4px; border: 1px solid #c4e8cf; border-radius: 12px; background: #f4fbf7; }
.toast strong { font-weight: 600; }
.toast span { color: #333837; }

/* Taskbar */
.taskbar {
  display: flex; justify-content: space-between; height: 40px; flex: none; color: #fff; font: 12px/18px "Open Sans", "Noto Sans", sans-serif;
  background: linear-gradient(90deg, #2b3222 0, #20381f 3%, #26392f 8%, #33302e 10%, #452529 11%, #3b282b 13%, #223038 14%, #1a2a35 18%, #18262f 21%, #21363a 23%, #253c36 27%, #26382d 28%, #303f36 33%, #264140 38%, #233c3a 44%, #233a37 51%, #3a3230 52%, #3d4239 54%, #46423a 56%, #3f402f 57%, #2a3526 59%, #1f3520 61%, #212c1f 64%, #282f20 75%, #283020 88%, #22271f 93%, #262d20 97%, #24301f 100%);
}
.tasks { display: flex; gap: 1px; }
.tasks button { width: 48px; height: 40px; display: grid; place-items: center; }
.tasks .running { background: linear-gradient(#76b9ed, #76b9ed) bottom / 40px 2px no-repeat; }
.tasks .focused { background: linear-gradient(#76b9ed, #76b9ed) bottom / 48px 2px no-repeat, #55645a; }
.tray { display: flex; align-items: center; padding-right: 25px; gap: 8px; background: linear-gradient(#8a8d85, #8a8d85) right 4px top / 1px 40px no-repeat; }
.lang { margin: 0 5px 0 3px; }
.clock { display: flex; flex-direction: column; align-items: center; }
.notes { position: relative; margin-left: 5px; }
.note-count { position: absolute; left: 7px; top: 7px; width: 16px; height: 16px; border: 1px solid #888; border-radius: 50%; background: #333; font-size: 10px; line-height: 14px; text-align: center; }
```
